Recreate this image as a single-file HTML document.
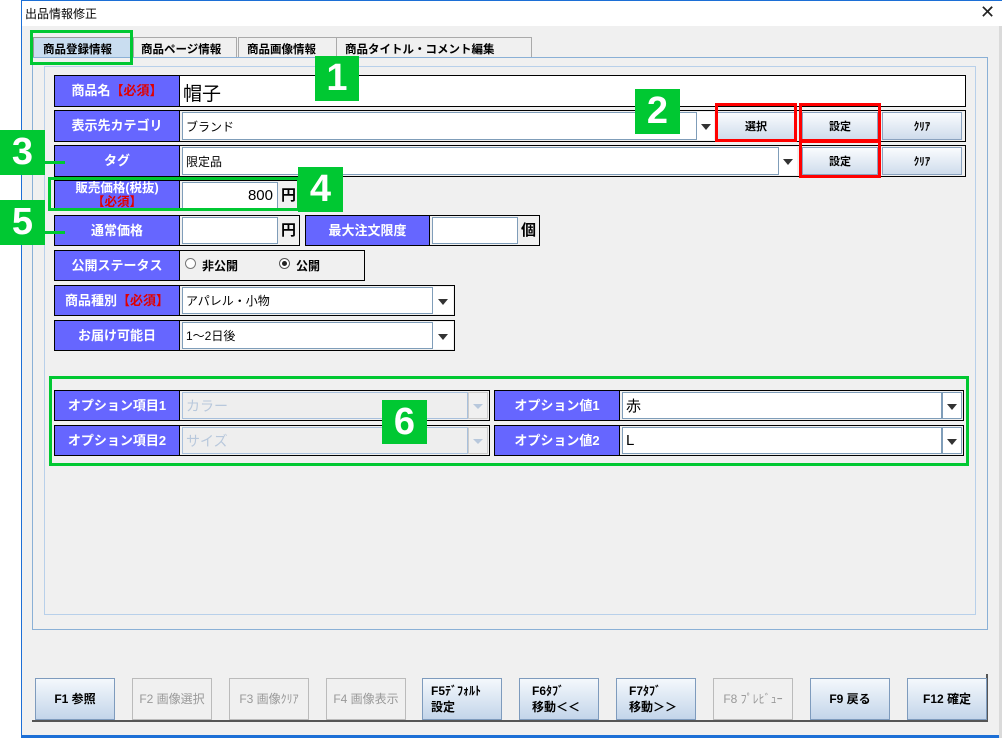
<!DOCTYPE html>
<html><head><meta charset="utf-8"><style>
*{box-sizing:border-box;margin:0;padding:0}
body{width:1002px;height:738px;position:relative;background:#fff;font-family:"Liberation Sans","Noto Sans CJK JP",sans-serif;overflow:hidden;font-size:12px}
.a{position:absolute}
.lab{position:absolute;background:#6666ff;color:#fff;font-weight:bold;font-size:13px;display:flex;align-items:center;justify-content:center;border:1px solid #000;line-height:1.05;text-align:center}
.red{color:#e00000}
.box{position:absolute;border:1px solid #000;background:#f0f0f0}
.inp{position:absolute;background:#fff;border:1px solid #7f9db9;font-size:12px;display:flex;align-items:center;padding-left:3px}
.arr{position:absolute;background:#fff;border:1px solid #7f9db9}
.arr:after{content:"";position:absolute;left:50%;top:50%;margin:-2px 0 0 -5px;border-left:5px solid transparent;border-right:5px solid transparent;border-top:6px solid #333}
.darr{position:absolute;border:1px solid #ccc;background:#f0f0f0}
.darr:after{content:"";position:absolute;left:50%;top:50%;margin:-2px 0 0 -5px;border-left:5px solid transparent;border-right:5px solid transparent;border-top:5px solid #b8c8dc}
.btn{position:absolute;background:linear-gradient(#fafcfe,#cfdcec);border:1px solid #8aa2bf;font-weight:bold;font-size:11px;display:flex;align-items:center;justify-content:center}
.fb{position:absolute;top:678px;width:80px;height:42px;background:linear-gradient(#f4f8fc,#c3d5ea);border:1px solid #7e9bbd;font-weight:bold;font-size:12px;display:flex;align-items:center;justify-content:center;line-height:1.35}
.fb.d{background:#f0f0f0;border-color:#bbb;color:#999;font-weight:normal}
.num{position:absolute;background:#00c832;color:#fff;font-weight:bold;font-size:38px;display:flex;align-items:center;justify-content:center;font-family:"Liberation Sans",sans-serif}
.g{position:absolute;border:3px solid #00c832}
.r{position:absolute;border:3px solid #f00}
</style></head><body>
<div class="a" style="left:21px;top:0;width:981px;height:738px;background:#f0f0f0;border-left:1px solid #1c6fd6;border-top:1px solid #1c6fd6;border-bottom:3px solid #1c6fd6"></div>
<div class="a" style="left:22px;top:1px;width:980px;height:25px;background:#fff"></div>
<div class="a" style="left:25px;top:5px;font-size:12px">出品情報修正</div>
<div class="a" style="left:980px;top:2px;font-size:18px;color:#222">✕</div>
<div class="a" style="left:999px;top:26px;width:3px;height:712px;background:#dadada"></div>
<div class="a" style="left:33px;top:37px;width:99px;height:21px;background:#c9ddf0;border:1px solid #999;border-bottom:none;font-weight:bold;font-size:11.5px;padding:3px 0 0 9px">商品登録情報</div>
<div class="a" style="left:133px;top:37px;width:104px;height:20px;background:#f0f0f0;border:1px solid #aaa;border-bottom:none;font-weight:bold;font-size:11.5px;padding:3px 0 0 7px">商品ページ情報</div>
<div class="a" style="left:238px;top:37px;width:99px;height:20px;border:1px solid #aaa;border-bottom:none;font-weight:bold;font-size:11.5px;padding:3px 0 0 8px">商品画像情報</div>
<div class="a" style="left:336px;top:37px;width:196px;height:20px;border:1px solid #aaa;border-bottom:none;font-weight:bold;font-size:11.5px;padding:3px 0 0 8px">商品タイトル・コメント編集</div>
<div class="a" style="left:32px;top:57px;width:956px;height:573px;border:1px solid #8ab0d6"></div>
<div class="a" style="left:44px;top:66px;width:932px;height:549px;border:1px solid #b8d0ea"></div>
<div class="box" style="left:54px;top:75px;width:912px;height:32px;background:#fff"></div>
<div class="lab" style="left:54px;top:75px;width:126px;height:32px">商品名<span class="red">【必須】</span></div>
<div class="a" style="left:183px;top:79px;font-size:19px">帽子</div>
<div class="box" style="left:54px;top:110px;width:912px;height:32px"></div>
<div class="lab" style="left:54px;top:110px;width:126px;height:32px">表示先カテゴリ</div>
<div class="inp" style="left:182px;top:112px;width:515px;height:28px">ブランド</div>
<div class="arr" style="left:697px;top:112px;width:17px;height:28px;border-color:#fff"></div>
<div class="btn" style="left:717px;top:112px;width:78px;height:28px">選択</div>
<div class="btn" style="left:802px;top:112px;width:76px;height:28px">設定</div>
<div class="btn" style="left:882px;top:112px;width:80px;height:28px">ｸﾘｱ</div>
<div class="box" style="left:54px;top:145px;width:912px;height:32px"></div>
<div class="lab" style="left:54px;top:145px;width:126px;height:32px">タグ</div>
<div class="inp" style="left:182px;top:147px;width:597px;height:28px">限定品</div>
<div class="arr" style="left:779px;top:147px;width:18px;height:28px;border-color:#fff"></div>
<div class="btn" style="left:802px;top:147px;width:76px;height:28px">設定</div>
<div class="btn" style="left:882px;top:147px;width:80px;height:28px">ｸﾘｱ</div>
<div class="box" style="left:54px;top:180px;width:246px;height:31px"></div>
<div class="lab" style="left:54px;top:180px;width:126px;height:31px;flex-direction:column;font-size:12.5px">販売価格(税抜)<span class="red">【必須】</span></div>
<div class="inp" style="left:182px;top:182px;width:96px;height:27px;justify-content:flex-end;padding-right:4px;font-size:15px">800</div>
<div class="a" style="left:281px;top:184px;font-weight:bold;font-size:15px">円</div>
<div class="box" style="left:54px;top:215px;width:246px;height:31px"></div>
<div class="lab" style="left:54px;top:215px;width:126px;height:31px">通常価格</div>
<div class="inp" style="left:182px;top:217px;width:96px;height:27px"></div>
<div class="a" style="left:281px;top:219px;font-weight:bold;font-size:15px">円</div>
<div class="box" style="left:305px;top:215px;width:235px;height:31px"></div>
<div class="lab" style="left:305px;top:215px;width:125px;height:31px">最大注文限度</div>
<div class="inp" style="left:432px;top:217px;width:86px;height:27px"></div>
<div class="a" style="left:521px;top:219px;font-weight:bold;font-size:15px">個</div>
<div class="box" style="left:54px;top:250px;width:311px;height:31px"></div>
<div class="lab" style="left:54px;top:250px;width:126px;height:31px">公開ステータス</div>
<div class="a" style="left:185px;top:258px;width:11px;height:11px;border:1px solid #777;border-radius:50%;background:#fff"></div>
<div class="a" style="left:202px;top:257px;font-weight:bold;font-size:12px">非公開</div>
<div class="a" style="left:279px;top:258px;width:11px;height:11px;border:1px solid #555;border-radius:50%;background:#fff"><div class="a" style="left:2px;top:2px;width:5px;height:5px;border-radius:50%;background:#222"></div></div>
<div class="a" style="left:296px;top:257px;font-weight:bold;font-size:12px">公開</div>
<div class="box" style="left:54px;top:285px;width:401px;height:31px"></div>
<div class="lab" style="left:54px;top:285px;width:126px;height:31px">商品種別<span class="red">【必須】</span></div>
<div class="inp" style="left:182px;top:287px;width:251px;height:27px">アパレル・小物</div>
<div class="arr" style="left:433px;top:287px;width:20px;height:27px;border-color:#fff"></div>
<div class="box" style="left:54px;top:320px;width:401px;height:31px"></div>
<div class="lab" style="left:54px;top:320px;width:126px;height:31px">お届け可能日</div>
<div class="inp" style="left:182px;top:322px;width:251px;height:27px">1～2日後</div>
<div class="arr" style="left:433px;top:322px;width:20px;height:27px;border-color:#fff"></div>
<div class="box" style="left:54px;top:390px;width:436px;height:31px"></div>
<div class="lab" style="left:54px;top:390px;width:126px;height:31px">オプション項目1</div>
<div class="inp" style="left:182px;top:392px;width:286px;height:27px;background:#eee;color:#b8c8dc;font-size:14px;border-color:#a8c0dc">カラー</div>
<div class="darr" style="left:468px;top:392px;width:20px;height:27px"></div>
<div class="box" style="left:54px;top:425px;width:436px;height:31px"></div>
<div class="lab" style="left:54px;top:425px;width:126px;height:31px">オプション項目2</div>
<div class="inp" style="left:182px;top:427px;width:286px;height:27px;background:#eee;color:#b8c8dc;font-size:14px;border-color:#a8c0dc">サイズ</div>
<div class="darr" style="left:468px;top:427px;width:20px;height:27px"></div>
<div class="box" style="left:494px;top:390px;width:470px;height:31px"></div>
<div class="lab" style="left:494px;top:390px;width:126px;height:31px">オプション値1</div>
<div class="inp" style="left:622px;top:392px;width:320px;height:27px;font-size:15px">赤</div>
<div class="arr" style="left:942px;top:392px;width:20px;height:27px"></div>
<div class="box" style="left:494px;top:425px;width:470px;height:31px"></div>
<div class="lab" style="left:494px;top:425px;width:126px;height:31px">オプション値2</div>
<div class="inp" style="left:622px;top:427px;width:320px;height:27px;font-size:15px">L</div>
<div class="arr" style="left:942px;top:427px;width:20px;height:27px"></div>
<div class="a" style="left:32px;top:674px;width:956px;height:48px;border-bottom:2px solid #555;border-right:2px solid #555"></div>
<div class="fb" style="left:35px">F1 参照</div>
<div class="fb d" style="left:132px">F2 画像選択</div>
<div class="fb d" style="left:229px">F3 画像ｸﾘｱ</div>
<div class="fb d" style="left:326px">F4 画像表示</div>
<div class="fb" style="left:422px;justify-content:flex-start;padding-left:8px">F5ﾃﾞﾌｫﾙﾄ<br>設定</div>
<div class="fb" style="left:519px;justify-content:flex-start;padding-left:12px">F6ﾀﾌﾞ<br>移動＜＜</div>
<div class="fb" style="left:616px;justify-content:flex-start;padding-left:12px">F7ﾀﾌﾞ<br>移動＞＞</div>
<div class="fb d" style="left:713px">F8 ﾌﾟﾚﾋﾞｭｰ</div>
<div class="fb" style="left:810px">F9 戻る</div>
<div class="fb" style="left:907px">F12 確定</div>
<div class="g" style="left:30px;top:30px;width:103px;height:35px"></div>
<div class="g" style="left:48px;top:177px;width:252px;height:34px"></div>
<div class="g" style="left:49px;top:376px;width:920px;height:90px"></div>
<div class="r" style="left:715px;top:103px;width:82px;height:39px"></div>
<div class="r" style="left:799px;top:103px;width:82px;height:39px"></div>
<div class="r" style="left:799px;top:140px;width:82px;height:38px"></div>
<div class="num" style="left:315px;top:56px;width:44px;height:45px">1</div>
<div class="num" style="left:635px;top:89px;width:45px;height:45px">2</div>
<div class="num" style="left:0;top:130px;width:45px;height:45px">3</div>
<div class="a" style="left:45px;top:161px;width:20px;height:3px;background:#00c832"></div>
<div class="num" style="left:298px;top:167px;width:45px;height:45px">4</div>
<div class="num" style="left:0;top:200px;width:45px;height:45px">5</div>
<div class="a" style="left:45px;top:231px;width:20px;height:3px;background:#00c832"></div>
<div class="num" style="left:382px;top:400px;width:45px;height:44px">6</div>
</body></html>
